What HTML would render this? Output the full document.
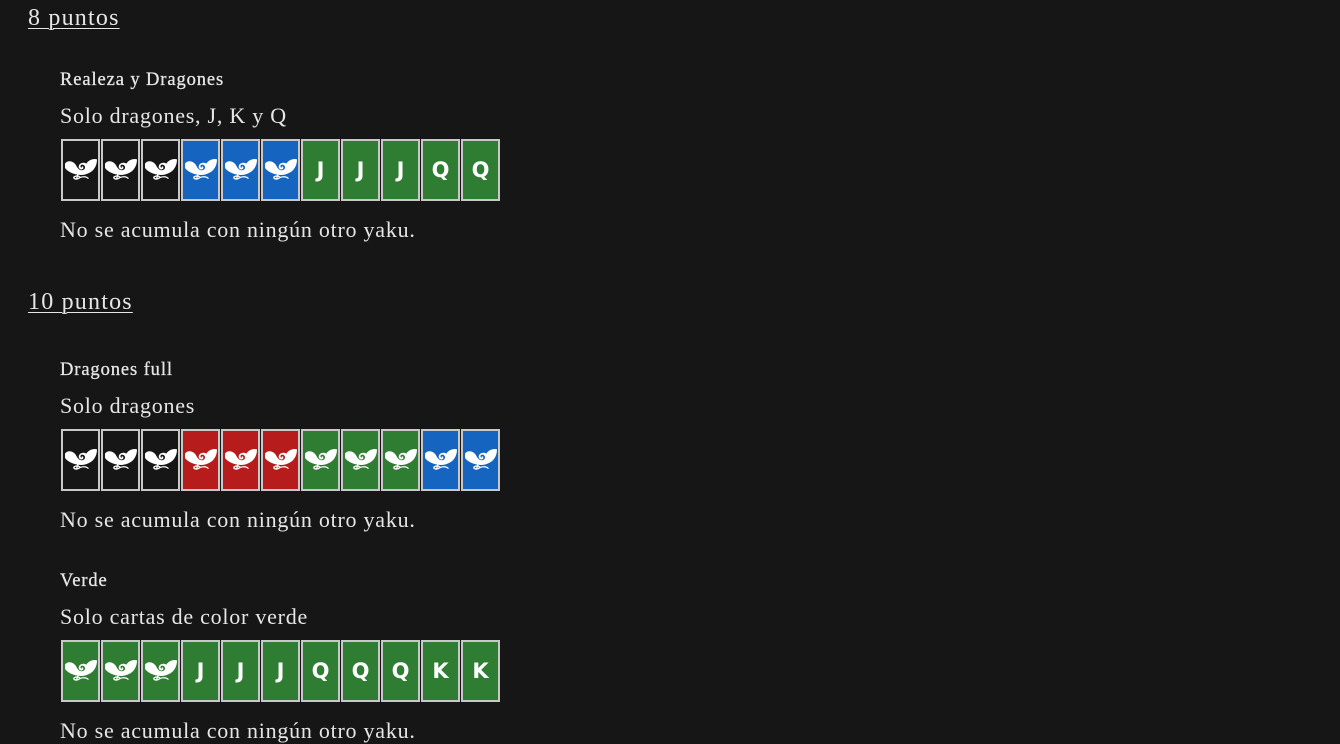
<!DOCTYPE html>
<html><head><meta charset="utf-8"><style>
body{margin:0;background:#161616;width:1340px;height:744px;overflow:hidden;position:relative;font-family:"Liberation Serif",serif;color:#e6e6e6}
.t{position:absolute;white-space:nowrap;line-height:1}
.h{left:28px;font-size:24px;letter-spacing:1.2px;text-decoration:underline;text-underline-offset:3px;text-decoration-thickness:1px}
.s{left:60px;font-size:18.5px;letter-spacing:0.9px;-webkit-text-stroke:0.3px #e6e6e6}
.b{left:60px;font-size:22px;letter-spacing:0.75px}
.row{position:absolute;left:61px;display:flex;gap:1px}
.c{width:35px;height:58px;border:2px solid #c8c8c8;display:flex;align-items:center;justify-content:center;color:#fff;font-family:"DejaVu Sans",sans-serif;font-weight:bold;font-size:21px}
.k{background:#161616}.u{background:#1565c0}.g{background:#2e7d32}.r{background:#b71c1c}
</style></head><body>
<svg width="0" height="0" style="position:absolute"><defs><symbol id="d" viewBox="0 0 30 22"><path fill="#fff" d="M0 5 C3 1 8 3 10 6 C12 10 14 12 17 11 C20 10 19 6 16 6 C14 6 14 9 16 9 C15 8 16 7 17 8 C18 10 15 12 13 9 C12 5 17 3 20 5 C22 2 26 0 30 1 C30 7 27 12 22 14 C18 16 14 16 10 15 C6 14 2 12 0 9 Z"/><path fill="none" stroke="#fff" stroke-width="1.2" d="M8 18 C10 16 13 16 14 18 C12 20 9 20 8 18 M14 18 C17 17 20 17 22 19 M12 15 L11 19"/></symbol></defs></svg>

<div class="t h" style="top:6px">8 puntos</div>
<div class="t s" style="top:71px">Realeza y Dragones</div>
<div class="t b" style="top:105px">Solo dragones, J, K y Q</div>
<div class="row" style="top:139px">
<div class="c k"><svg width="32" height="24"><use href="#d"/></svg></div><div class="c k"><svg width="32" height="24"><use href="#d"/></svg></div><div class="c k"><svg width="32" height="24"><use href="#d"/></svg></div><div class="c u"><svg width="32" height="24"><use href="#d"/></svg></div><div class="c u"><svg width="32" height="24"><use href="#d"/></svg></div><div class="c u"><svg width="32" height="24"><use href="#d"/></svg></div><div class="c g">J</div><div class="c g">J</div><div class="c g">J</div><div class="c g">Q</div><div class="c g">Q</div>
</div>
<div class="t b" style="top:219px">No se acumula con ningún otro yaku.</div>

<div class="t h" style="top:290px">10 puntos</div>
<div class="t s" style="top:361px">Dragones full</div>
<div class="t b" style="top:395px">Solo dragones</div>
<div class="row" style="top:429px">
<div class="c k"><svg width="32" height="24"><use href="#d"/></svg></div><div class="c k"><svg width="32" height="24"><use href="#d"/></svg></div><div class="c k"><svg width="32" height="24"><use href="#d"/></svg></div><div class="c r"><svg width="32" height="24"><use href="#d"/></svg></div><div class="c r"><svg width="32" height="24"><use href="#d"/></svg></div><div class="c r"><svg width="32" height="24"><use href="#d"/></svg></div><div class="c g"><svg width="32" height="24"><use href="#d"/></svg></div><div class="c g"><svg width="32" height="24"><use href="#d"/></svg></div><div class="c g"><svg width="32" height="24"><use href="#d"/></svg></div><div class="c u"><svg width="32" height="24"><use href="#d"/></svg></div><div class="c u"><svg width="32" height="24"><use href="#d"/></svg></div>
</div>
<div class="t b" style="top:509px">No se acumula con ningún otro yaku.</div>

<div class="t s" style="top:572px">Verde</div>
<div class="t b" style="top:606px">Solo cartas de color verde</div>
<div class="row" style="top:640px">
<div class="c g"><svg width="32" height="24"><use href="#d"/></svg></div><div class="c g"><svg width="32" height="24"><use href="#d"/></svg></div><div class="c g"><svg width="32" height="24"><use href="#d"/></svg></div><div class="c g">J</div><div class="c g">J</div><div class="c g">J</div><div class="c g">Q</div><div class="c g">Q</div><div class="c g">Q</div><div class="c g">K</div><div class="c g">K</div>
</div>
<div class="t b" style="top:720px">No se acumula con ningún otro yaku.</div>
</body></html>
